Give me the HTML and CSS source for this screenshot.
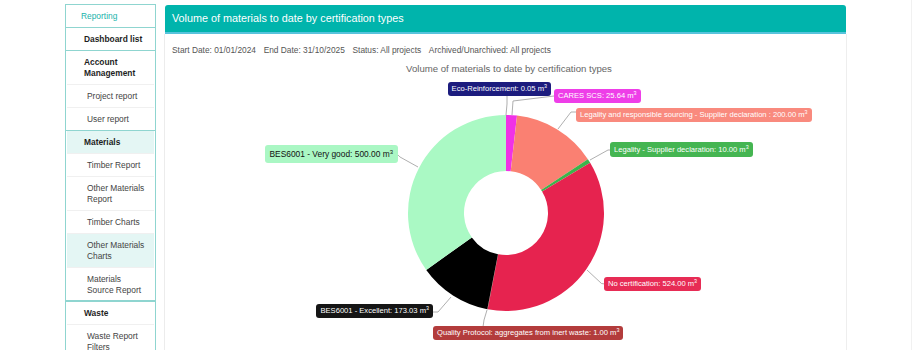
FILE: index.html
```html
<!DOCTYPE html>
<html lang="en">
<head>
<meta charset="utf-8">
<title>Volume of materials to date by certification types</title>
<link rel="stylesheet" href="styles.css">
</head>
<body>
<div class="page">
  <nav class="sidebar">
    <div class="item full head">Reporting</div>
    <div class="item full top">Dashboard list</div>
    <div class="item inset top">Account Management</div>
    <div class="item inset sub">Project report</div>
    <div class="item full sub">User report</div>
    <div class="item inset top active">Materials</div>
    <div class="item inset sub">Timber Report</div>
    <div class="item inset sub">Other Materials Report</div>
    <div class="item inset sub">Timber Charts</div>
    <div class="item inset sub active">Other Materials Charts</div>
    <div class="item full sub thick">Materials Source Report</div>
    <div class="item inset top">Waste</div>
    <div class="item inset sub">Waste Report Filters</div>
  </nav>
  <main class="panel">
    <div class="panel-header">Volume of materials to date by certification types</div>
    <div class="panel-body">
      <div class="filters">
        <span>Start Date: 01/01/2024</span>
        <span>End Date: 31/10/2025</span>
        <span>Status: All projects</span>
        <span>Archived/Unarchived: All projects</span>
      </div>
      <div class="chart">
        <svg class="chart-svg" width="681" height="300" viewBox="165 55 681 300" xmlns="http://www.w3.org/2000/svg">
          <text class="chart-title" x="509" y="71.5" text-anchor="middle">Volume of materials to date by certification types</text>
          <g class="connectors">
            <polyline points="506,115 507,104 507,96"/>
            <polyline points="512,115 513,101 554,96"/>
            <polyline points="558,129 571,112 576,112"/>
            <polyline points="590,160 608,150 611,150"/>
            <polyline points="587,270 601.5,283.5 605,284"/>
            <polyline points="487,310 484,320 483,327"/>
            <polyline points="451,297 438,312 433,312"/>
            <polyline points="418,167 400,157 397,154"/>
          </g>
          <path fill="#f032e6" d="M 506.01 115 A 98 98 0 0 1 517.01 115.62 L 510.72 171.27 A 42 42 0 0 0 506 171 Z"/>
          <path fill="#fa8072" d="M 517.01 115.62 A 98 98 0 0 1 587.88 159.15 L 541.09 189.92 A 42 42 0 0 0 510.72 171.27 Z"/>
          <path fill="#3cb44b" d="M 587.88 159.15 A 98 98 0 0 1 590.18 162.82 L 542.08 191.49 A 42 42 0 0 0 541.09 189.92 Z"/>
          <path fill="#e6234f" d="M 590.18 162.82 A 98 98 0 0 1 487.71 309.28 L 498.16 254.26 A 42 42 0 0 0 542.08 191.49 Z"/>
          <path fill="#b0383a" d="M 487.71 309.28 A 98 98 0 0 1 487.29 309.2 L 497.98 254.23 A 42 42 0 0 0 498.16 254.26 Z"/>
          <path fill="#000000" d="M 487.29 309.2 A 98 98 0 0 1 426.24 269.94 L 471.82 237.4 A 42 42 0 0 0 497.98 254.23 Z"/>
          <path fill="#aaf9c4" d="M 426.24 269.94 A 98 98 0 0 1 506 115 L 506 171 A 42 42 0 0 0 471.82 237.4 Z"/>
        </svg>
        <div class="dl dl-eco">Eco-Reinforcement: 0.05 m<span class="sup">3</span></div>
        <div class="dl dl-cares">CARES SCS: 25.64 m<span class="sup">3</span></div>
        <div class="dl dl-legres">Legality and responsible sourcing - Supplier declaration : 200.00 m<span class="sup">3</span></div>
        <div class="dl dl-legsup">Legality - Supplier declaration: 10.00 m<span class="sup">3</span></div>
        <div class="dl dl-besvg">BES6001 - Very good: 500.00 m<span class="sup">3</span></div>
        <div class="dl dl-besex">BES6001 - Excellent: 173.03 m<span class="sup">3</span></div>
        <div class="dl dl-qp">Quality Protocol: aggregates from inert waste: 1.00 m<span class="sup">3</span></div>
        <div class="dl dl-nocert">No certification: 524.00 m<span class="sup">3</span></div>
      </div>
    </div>
  </main>
  <div class="edge"></div>
</div>
</body>
</html>
```
FILE: styles.css
```css
html, body {
  margin: 0;
  padding: 0;
  height: 350px;
  overflow: hidden;
  background: #ffffff;
  font-family: "Liberation Sans", Arial, sans-serif;
}

.page {
  display: flex;
  align-items: flex-start;
  padding: 4px 0 0 65px;
  height: 346px;
}

/* Sidebar */
.sidebar {
  width: 91px;
  box-sizing: border-box;
  border: 1px solid #8fd5d0;
  flex-shrink: 0;
  font-size: 8.4px;
}

.item {
  line-height: 11px;
  padding-top: 6px;
  padding-bottom: 5px;
  border-bottom: 1px solid #f0f0f0;
}

.item.inset {
  margin: 0 1px;
}

.item.full {
  border-bottom-color: #8fd5d0;
}

.item.thick {
  border-bottom-width: 2px;
  padding-bottom: 4px;
}

.item.head {
  color: #19b3ab;
  padding-left: 15px;
}

.item.top {
  font-weight: bold;
  color: #1e1e1e;
}

.item.full.top { padding-left: 18px; padding-right: 8px; }
.item.inset.top { padding-left: 17px; padding-right: 8px; }

.item.sub {
  color: #444444;
}

.item.full.sub { padding-left: 21px; padding-right: 8px; }
.item.inset.sub { padding-left: 20px; padding-right: 7px; }

.item.active {
  background: #e4f6f4;
}

/* Panel */
.panel {
  width: 683px;
  margin-left: 8px;
  margin-top: 1px;
  flex-shrink: 0;
}

.panel-header {
  margin: 0 1px;
  height: 27px;
  line-height: 27px;
  padding-left: 7px;
  background: #00b4ac;
  border-bottom: 2px solid #58c3dc;
  border-radius: 3px 3px 0 0;
  color: #ffffff;
  font-size: 10.8px;
}

.panel-body {
  border-left: 1px solid #ececec;
  border-right: 1px solid #eeeeee;
  height: 330px;
}

.filters {
  display: flex;
  gap: 7.7px;
  padding: 11px 0 0 7px;
  height: 10px;
  line-height: 10px;
  font-size: 8.35px;
  color: #555555;
  white-space: nowrap;
}

.chart {
  position: relative;
  width: 681px;
  height: 300px;
}

.chart-svg {
  display: block;
}

.chart-title {
  font-family: "Liberation Sans", Arial, sans-serif;
  font-size: 9.6px;
  fill: #666666;
}

.connectors polyline {
  fill: none;
  stroke: #9a9a9a;
  stroke-width: 0.8;
}

/* Data labels */
.dl {
  position: absolute;
  font-size: 7.6px;
  line-height: 10px;
  padding: 2px 4px 2px 4px;
  border-radius: 3px;
  color: #ffffff;
  white-space: nowrap;
}

.sup {
  font-size: 5.4px;
  vertical-align: 3px;
  line-height: 0;
}

.dl-eco { right: 295px; top: 27px; background: #1c1c7e; }
.dl-cares { left: 389px; top: 34px; background: #ee3ee8; }
.dl-legres { left: 411px; top: 53px; background: #f98a7e; }
.dl-legsup { left: 445px; top: 87px; background: #45b552; padding-top: 2.5px; padding-bottom: 2.5px; }
.dl-besvg {
  right: 448px;
  top: 90px;
  background: #aaf7c4;
  color: #111111;
  font-size: 8.4px;
  line-height: 11px;
  padding: 3.5px 5px 3px 5px;
}
.dl-besvg .sup { font-size: 6px; vertical-align: 3.5px; }
.dl-besex { right: 413px; top: 249px; background: #151515; }
.dl-qp { left: 268px; top: 271px; background: #b33c3c; }
.dl-nocert { left: 439px; top: 222px; background: #e72c55; }

.edge {
  margin-left: 64px;
  margin-top: -4px;
  width: 0;
  height: 350px;
  border-left: 1px solid #f1f1f1;
}
```
